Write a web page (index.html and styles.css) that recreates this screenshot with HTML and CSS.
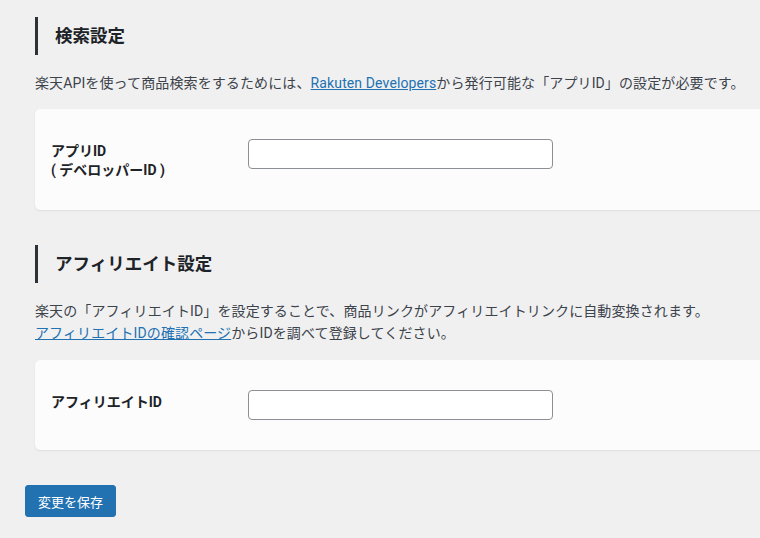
FILE: index.html
```html
<!DOCTYPE html>
<html lang="ja">
<head>
<meta charset="utf-8">
<title>設定</title>
<link rel="stylesheet" href="styles.css">
</head>
<body>
<form class="page">
  <section class="section">
    <h2 class="section-title">検索設定</h2>
    <p class="desc">楽天APIを使って商品検索をするためには、<a href="#" class="link">Rakuten Developers</a>から発行可能な「アプリID」の設定が必要です。</p>
    <div class="card">
      <div class="row">
        <label class="label">アプリID<br>( デベロッパーID )</label>
        <input class="field" type="text">
      </div>
    </div>
  </section>
  <section class="section section-second">
    <h2 class="section-title">アフィリエイト設定</h2>
    <p class="desc desc-second">楽天の「アフィリエイトID」を設定することで、商品リンクがアフィリエイトリンクに自動変換されます。<br><a href="#" class="link">アフィリエイトIDの確認ページ</a>からIDを調べて登録してください。</p>
    <div class="card">
      <div class="row">
        <label class="label">アフィリエイトID</label>
        <input class="field" type="text">
      </div>
    </div>
  </section>
  <button class="save" type="button">変更を保存</button>
</form>
</body>
</html>
```
FILE: styles.css
```css
html, body {
  margin: 0;
  padding: 0;
  overflow: hidden;
  background: #f0f0f1;
}
body {
  font-family: "Roboto", "Noto Sans CJK JP", sans-serif;
  color: #3c434a;
  font-size: 14px;
}
.page {
  padding: 17px 0 0 25px;
}
.section {
  margin-left: 10px;
}
.section-second {
  margin-top: 35px;
}
.section-title {
  margin: 0;
  height: 38px;
  line-height: 38px;
  border-left: 3px solid #2c3338;
  padding-left: 17px;
  font-size: 17.5px;
  font-weight: 700;
  color: #1d2327;
}
.desc {
  margin: 17px 0 15px;
  line-height: 22px;
  font-size: 14px;
  letter-spacing: 0.12px;
  color: #3c434a;
}
.desc-second {
  margin-bottom: 16px;
}
.link {
  color: #2271b1;
  text-decoration: underline;
}
.card {
  width: 760px;
  background: #fcfcfc;
  border-radius: 5px;
  box-shadow: 0 1px 2px rgba(0, 0, 0, 0.07), 0 0 1px rgba(0, 0, 0, 0.05);
  padding: 30px 16px;
  box-sizing: border-box;
}
.row {
  display: flex;
  align-items: flex-start;
}
.label {
  width: 197px;
  flex: none;
  padding-top: 3px;
  line-height: 19px;
  font-size: 14px;
  font-weight: 700;
  color: #1d2327;
}
.field {
  width: 305px;
  height: 30px;
  box-sizing: border-box;
  margin: 0;
  border: 1px solid #8c8f94;
  border-radius: 4px;
  background: #fff;
}
.save {
  margin-top: 35px;
  width: 91px;
  height: 32px;
  padding: 0;
  border: 1px solid #2271b1;
  border-radius: 3px;
  background: #2271b1;
  color: #fff;
  font-family: "Roboto", "Noto Sans CJK JP", sans-serif;
  font-size: 13px;
}
```
